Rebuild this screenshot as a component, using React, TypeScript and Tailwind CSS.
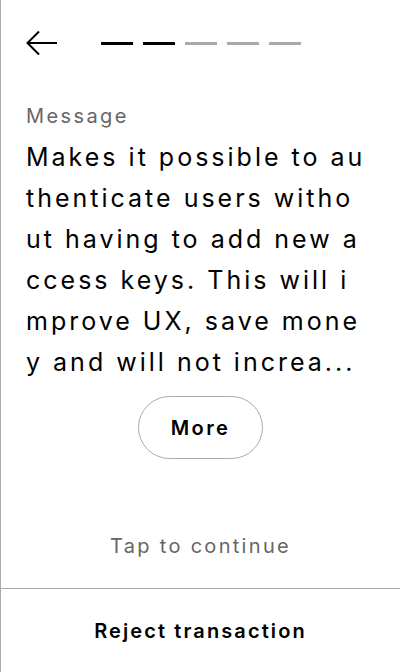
import React from "react";

// message preview, wrapped the way the device shows it (split mid-word, clamped)
const messageLines = [
  "Makes it possible to au",
  "thenticate users witho",
  "ut having to add new a",
  "ccess keys. This will i",
  "mprove UX, save mone",
  "y and will not increa...",
];

const steps = [true, true, false, false, false];

const App = () => {
  return (
    <div
      className="h-[672px] w-[400px] bg-white border-l border-[#aaa] flex flex-col"
      style={{ fontFamily: "Inter, 'Noto Sans', sans-serif" }}>
      <div className="flex items-center h-[86px] pl-[25px]">
        <button className="w-[32px] h-[26px] flex items-center">
          <svg width="32" height="26" viewBox="0 0 32 26" fill="none">
            <path
              d="M31 13H2M13 1.5L1.5 13L13 24.5"
              stroke="#000"
              strokeWidth="2"
            />
          </svg>
        </button>
        <div className="flex gap-[10px] ml-[43px]">
          {steps.map((done, i) => (
            <div
              key={i}
              className={`w-[32px] h-[3px] ${done ? "bg-black" : "bg-[#aaa]"}`}
            />
          ))}
        </div>
      </div>

      <div className="px-[25px] pt-[17px]">
        <div className="text-[20px] leading-[26px] tracking-[2.4px] text-[#666]">
          Message
        </div>
        <p className="mt-[8px] text-[25px] leading-[41px] tracking-[3px] text-black whitespace-nowrap">
          {messageLines.map((line, i) => (
            <span key={i} className="block">
              {line}
            </span>
          ))}
        </p>
      </div>

      <div className="flex justify-center mt-[13px]">
        <button className="w-[125px] h-[63px] rounded-full border border-[#aaa] text-[20px] tracking-[2.4px] font-semibold text-black">
          More
        </button>
      </div>

      <div className="flex-1 flex items-end justify-center pb-[27px]">
        <span className="text-[20px] tracking-[2.3px] text-[#666]">
          Tap to continue
        </span>
      </div>

      <div className="h-[84px] border-t border-[#aaa] flex items-center justify-center">
        <span className="text-[20px] tracking-[2.1px] font-semibold text-black">
          Reject transaction
        </span>
      </div>
    </div>
  );
};

export default App;
